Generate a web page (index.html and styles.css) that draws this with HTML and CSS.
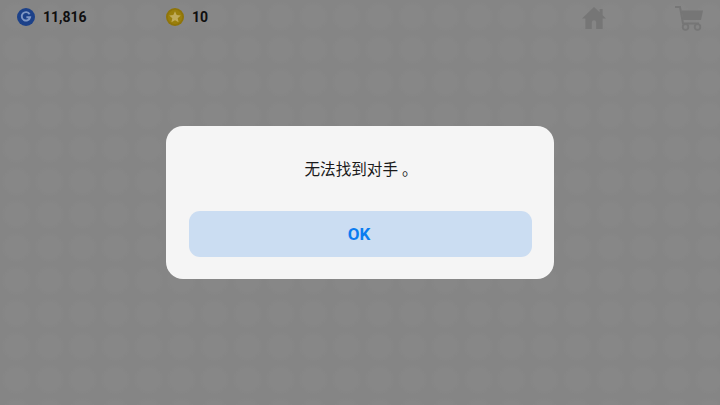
FILE: index.html
```html
<!DOCTYPE html>
<html lang="zh">
<head>
  <meta charset="UTF-8" />
  <title>无法找到对手</title>
  <link rel="stylesheet" href="styles.css">
</head>
<body>

  <div class="topbar">
    <div class="stat stat-gold">
      <svg class="stat-icon" viewBox="0 0 18 18">
        <circle cx="9" cy="9" r="9" fill="#1c4189"/>
        <path d="M12.6 6.2A4.2 4.2 0 1 0 13.1 9.2H9.4" fill="none" stroke="#7f97c4" stroke-width="1.9"/>
      </svg>
      <span class="stat-value">11,816</span>
    </div>
    <div class="stat">
      <svg class="stat-icon" viewBox="0 0 18 18">
        <circle cx="9" cy="9" r="9" fill="#8f7408"/>
        <circle cx="9" cy="9" r="7.2" fill="#9a7f0c"/>
        <path d="M9 3.2l1.7 3.8 4.1.4-3.1 2.8.9 4L9 12.2l-3.6 2 .9-4-3.1-2.8 4.1-.4z" fill="#c0ab5a"/>
      </svg>
      <span class="stat-value">10</span>
    </div>
    <div class="nav">
      <svg class="nav-home" viewBox="0 0 26 24">
        <path fill-rule="evenodd" fill="#767676" d="M13 1L1 12.5h3.4V23h17.2V12.5H25L21.6 9.2V3h-3v3.3zM10.8 23v-6.5a2.2 2.2 0 0 1 4.4 0V23z"/>
      </svg>
      <svg class="nav-cart" viewBox="0 0 30 26">
        <path d="M1 2h5l3 16.5h16" fill="none" stroke="#767676" stroke-width="2"/>
        <path d="M7.5 5.5H29l-2 9.5H9.2z" fill="#767676"/>
        <circle cx="11.5" cy="22" r="2.8" fill="none" stroke="#767676" stroke-width="1.8"/>
        <circle cx="23.5" cy="22" r="2.8" fill="none" stroke="#767676" stroke-width="1.8"/>
      </svg>
    </div>
  </div>

  <div class="overlay">
    <div class="dialog">
      <div class="dialog-msg">无法找到对手 。</div>
      <button class="dialog-btn">OK</button>
    </div>
  </div>

</body>
</html>
```

FILE: styles.css
```css
html, body {
  height: 100%;
}
body {
  margin: 0;
  overflow: hidden;
  font-family: Roboto, "Noto Sans CJK SC", sans-serif;
  background-color: #858585;
  background-image: radial-gradient(circle at center, #878787 0, #878787 11px, transparent 15px);
  background-size: 33px 33px;
}
.topbar {
  display: flex;
  align-items: center;
  height: 33px;
  padding-left: 17px;
  padding-right: 16px;
}
.stat {
  display: flex;
  align-items: center;
  gap: 8px;
}
.stat-gold {
  width: 149px;
}
.stat-icon {
  width: 18px;
  height: 18px;
}
.stat-value {
  font-size: 14px;
  font-weight: 700;
  color: #0f0f0f;
}
.nav {
  display: flex;
  align-items: center;
  gap: 67px;
  margin-left: auto;
  padding-top: 3px;
}
.nav-home {
  width: 26px;
  height: 24px;
}
.nav-cart {
  width: 30px;
  height: 26px;
}
.overlay {
  position: fixed;
  inset: 0;
  display: flex;
  align-items: center;
  justify-content: center;
}
.dialog {
  box-sizing: border-box;
  width: 388px;
  height: 153px;
  margin-left: -1px;
  padding: 0 22px 22px 23px;
  display: flex;
  flex-direction: column;
  background: #f5f5f5;
  border-radius: 17px;
}
.dialog-msg {
  flex: 1;
  display: flex;
  align-items: center;
  justify-content: center;
  font-size: 15.6px;
  color: #1a1a1a;
  padding-left: 2px;
  padding-bottom: 2px;
}
.dialog-btn {
  height: 46px;
  border: none;
  border-radius: 11px;
  background: #cbddf2;
  color: #0a7cf0;
  font-family: inherit;
  font-size: 17px;
  font-weight: 700;
  padding: 0 2px 0 0;
  cursor: pointer;
}
```
